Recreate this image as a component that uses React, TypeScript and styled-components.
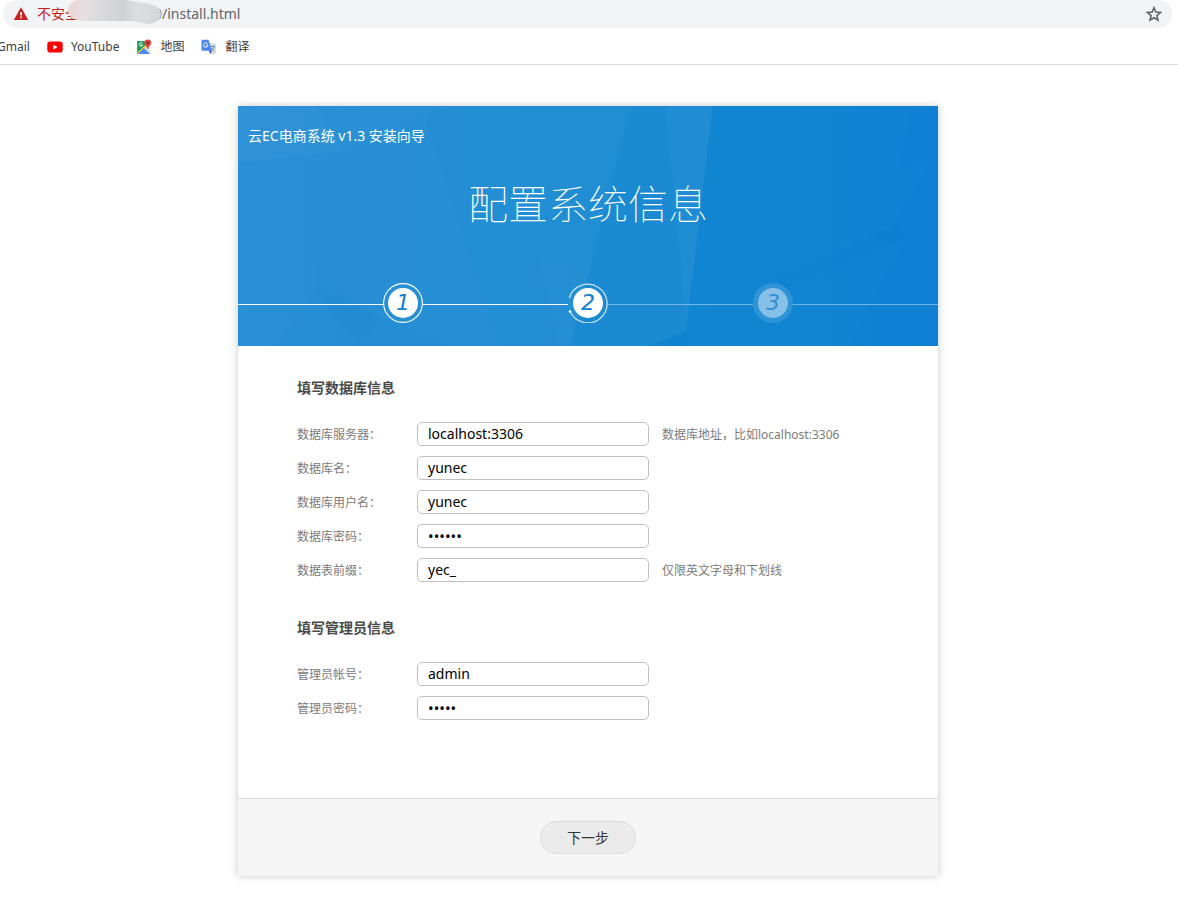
import React, { useState } from "react";
import styled, { createGlobalStyle } from "styled-components";

const GlobalStyle = createGlobalStyle`
  * { box-sizing: border-box; }
  body {
    margin: 0;
    background: #fff;
    color: #7b7b7b;
    font: 12px/20px "Noto Sans", "Noto Sans CJK SC", sans-serif;
  }
  button, input { font-family: inherit; }
`;

/* ---------- browser chrome ---------- */

const Chrome = styled.header`
  border-bottom: 1px solid #dadce0;
`;

const AddressBar = styled.div`
  display: flex;
  align-items: center;
  height: 28px;
  margin: 0 6px 0 3px;
  padding: 0 10px;
  border-radius: 14px;
  background: #f1f3f4;
`;

const SecurityButton = styled.button`
  display: flex;
  align-items: center;
  gap: 8px;
  flex: none;
  padding: 0;
  border: 0;
  background: none;
  color: #c5221f;
  font-size: 14px;
  line-height: 20px;
`;

const Redaction = styled.svg`
  position: relative;
  flex: none;
  width: 96px;
  height: 28px;
  margin: 0 -9px 0 -12px;
`;

const AddressInput = styled.input`
  flex: 1;
  min-width: 0;
  height: 26px;
  padding: 0 0 2px;
  border: 0;
  outline: 0;
  background: none;
  color: #5f6368;
  font-size: 14px;
`;

const IconButton = styled.button`
  display: flex;
  padding: 0;
  border: 0;
  background: none;
`;

const Bookmarks = styled.nav`
  display: flex;
  gap: 17px;
  height: 36px;
  align-items: center;
  padding-top: 2px;
  margin-left: -3px;
`;

const Bookmark = styled.a`
  display: flex;
  align-items: center;
  gap: 8px;
  color: #3c4043;
  text-decoration: none;
`;

/* ---------- wizard ---------- */

const Page = styled.main`
  display: flex;
  justify-content: center;
  padding: 41px 2px 24px 0;
`;

const Card = styled.form`
  width: 100%;
  max-width: 700px;
  background: #fff;
  box-shadow: 0 0 8px rgba(0, 0, 0, 0.22);
`;

const Banner = styled.div`
  position: relative;
  height: 240px;
  overflow: hidden;
  color: #fff;
`;

const Backdrop = styled.svg`
  position: absolute;
  inset: 0;
  width: 100%;
  height: 100%;
`;

const BannerContent = styled.div`
  position: relative;
  padding-top: 20px;
`;

const Product = styled.p`
  margin: 0;
  padding: 0 10px;
  font-size: 14px;
  line-height: 20px;
`;

const Title = styled.h1`
  margin: 28px 0 49px;
  text-align: center;
  font-size: 40px;
  line-height: 60px;
  font-weight: 100;
`;

const Steps = styled.ol`
  display: flex;
  align-items: center;
  margin: 0;
  padding: 0;
  list-style: none;
`;

const Line = styled.li<{ $dim?: boolean }>`
  flex: 1;
  height: 1px;
  margin-top: 2px;
  background: ${(p) => (p.$dim ? "rgba(255,255,255,.4)" : "#fff")};
`;

const Step = styled.li<{ $dim?: boolean }>`
  position: relative;
  display: flex;
  align-items: center;
  justify-content: center;
  width: 40px;
  height: 40px;
  border-radius: 50%;
  background: ${(p) => (p.$dim ? "rgba(255,255,255,.13)" : "none")};
`;

const Ring = styled.svg`
  position: absolute;
  inset: 0;
`;

const Disc = styled.span<{ $dim?: boolean }>`
  display: flex;
  align-items: center;
  justify-content: center;
  width: 30px;
  height: 30px;
  border-radius: 50%;
  background: ${(p) => (p.$dim ? "#86c0e8" : "#fff")};
  color: ${(p) => (p.$dim ? "#2f8fd3" : "#1480cb")};
  font: italic 22px/30px "DejaVu Sans", sans-serif;
`;

const Body = styled.div`
  padding: 30px 59px 78px;
`;

const Section = styled.fieldset`
  margin: 0 0 34px;
  padding: 0;
  border: 0;
  min-width: 0;
  &:last-child { margin-bottom: 0; }
`;

const Legend = styled.legend`
  margin-bottom: 22px;
  padding: 0;
  color: #4a4a4a;
  font-size: 14px;
  line-height: 24px;
  font-weight: 700;
`;

const Fields = styled.div`
  display: grid;
  gap: 10px;
`;

const Row = styled.div`
  display: flex;
  align-items: center;
`;

const Label = styled.label`
  flex: none;
  width: 120px;
  padding-top: 2px;
`;

const TextInput = styled.input`
  width: 232px;
  height: 24px;
  padding: 0 10px 2px;
  border: 1px solid #bfbfbf;
  border-radius: 5px;
  outline: 0;
  background: #fff;
  color: #000;
  font-size: 14px;
  line-height: 20px;
  &[type="password"] {
    padding-bottom: 0;
    font-size: 15px;
  }
`;

const Hint = styled.span`
  margin-left: 13px;
  padding-top: 2px;
`;

const Footer = styled.footer`
  display: flex;
  justify-content: center;
  padding: 22px 0;
  border-top: 1px solid #dcdcdc;
  background: #f5f5f5;
`;

const NextButton = styled.button`
  width: 96px;
  height: 33px;
  padding: 0;
  border: 1px solid #dcdcdc;
  border-radius: 17px;
  background: #ebebeb;
  color: #333;
  font-size: 14px;
  line-height: 31px;
`;

const WarningIcon = () => (
  <svg width="16" height="16" viewBox="0 0 16 16" aria-hidden="true">
    <path d="M8 1.2 15.2 14H.8Z" fill="#c5221f" />
    <path d="M7.2 6h1.7v3.6H7.2zM7.2 10.6h1.7v1.7H7.2z" fill="#fff" />
  </svg>
);

const StarIcon = () => (
  <svg width="16" height="16" viewBox="0 0 16 16" aria-hidden="true">
    <path
      d="m8 1.8 1.8 4.3 4.7.4-3.6 3.1 1.1 4.6L8 11.8l-4 2.4 1.1-4.6-3.6-3.1 4.7-.4Z"
      fill="none"
      stroke="#5f6368"
      strokeWidth="1.6"
    />
  </svg>
);

const YouTubeIcon = () => (
  <svg width="16" height="16" viewBox="0 0 16 16" aria-hidden="true">
    <rect x=".3" y="2.6" width="15.4" height="11" rx="2.8" fill="#f00" />
    <path d="m6.4 5.8 4.2 2.3-4.2 2.3Z" fill="#fff" />
  </svg>
);

const MapsIcon = () => (
  <svg width="16" height="16" viewBox="0 0 16 16" aria-hidden="true">
    <path d="M1.5 2H11v6L2 15.200l-.9-.8V2.600Z" fill="#1e9c57" />
    <path d="M1.200 13.800 11.500 4l1.800 1.800L3 15Z" fill="#fbc934" />
    <path d="M7.800 9 14.400 15H2Z" fill="#4a8af4" />
    <path d="M8.500 8.600 11 6.400l3.400 3V15Z" fill="#dfe3e6" />
    <path d="M6.400 4.500A1.700 1.700 0 1 0 6.500 6H4.800" fill="none" stroke="#fff" strokeWidth=".9" />
    <path d="M11.800.6a3.400 3.400 0 0 0-3.400 3.400c0 2.500 2.700 3 3.400 7 .7-4 3.400-4.500 3.400-7A3.400 3.400 0 0 0 11.800.6Z" fill="#e0443a" />
    <circle cx="11.8" cy="4" r="1.2" fill="#7c231d" />
  </svg>
);

const TranslateIcon = () => (
  <svg width="16" height="16" viewBox="0 0 16 16" aria-hidden="true">
    <path d="M6 4.300h8a1 1 0 0 1 1 1V14a1 1 0 0 1-1 1H9.500Z" fill="#dadce0" />
    <path d="M9.500 7.500h4.500M11.700 6.500v1M13.200 7.600c-.5 2-1.700 3.400-3 4.200M10.300 8.800c.7 1.300 1.700 2.400 3 3.200" fill="none" stroke="#78849b" strokeWidth=".9" />
    <path d="m7.500 11.500 3.500 0L9.600 15Z" fill="#3a5bbb" />
    <path d="M1.500.8h6L11 11.800H1.500a1 1 0 0 1-1-1v-9a1 1 0 0 1 1-1Z" fill="#4a86ee" />
    <path d="M6.500 4.800A2.200 2.200 0 1 0 6.900 6.400H4.900" fill="none" stroke="#fff" strokeWidth="1" />
  </svg>
);

const Facets = () => (
  <Backdrop viewBox="0 0 700 240" preserveAspectRatio="none" aria-hidden="true">
    <defs>
      <linearGradient id="west" x1="0" y1="0" x2="1" y2="0">
        <stop offset="0" stopColor="#2a90d5" />
        <stop offset="1" stopColor="#238dd3" />
      </linearGradient>
      <linearGradient id="east" x1="0" y1="0" x2="1" y2="0">
        <stop offset="0" stopColor="#1587d2" />
        <stop offset=".75" stopColor="#1185d2" />
        <stop offset="1" stopColor="#1081d4" />
      </linearGradient>
      <linearGradient id="shade" x1="0" y1="1" x2="1" y2="0">
        <stop offset="0" stopColor="#0b7dce" stopOpacity="0" />
        <stop offset="1" stopColor="#0b7dce" stopOpacity=".6" />
      </linearGradient>
    </defs>
    <rect width="700" height="240" fill="url(#east)" />
    <path d="M380 0H475L448 225 410 240H320Z" fill="#1b8ad3" />
    <path d="M0 0H393L353 160 332 240H0Z" fill="url(#west)" />
    <path d="M0 0H77L107 45 0 57Z" fill="#fff" opacity=".025" />
    <path d="M77 0H208L186 10 107 45Z" fill="#fff" opacity=".01" />
    <path d="M186 10 208 0H393L353 160 332 240H262Z" fill="#158cd4" opacity=".14" />
    <path d="M76 156 76 184 38 240H120L142 213Z" fill="#0784d0" opacity=".06" />
    <path d="M76 184 180 226 210 240H120Z" fill="#0784d0" opacity=".1" />
    <path d="M300 150 320 240H332L353 160Z" fill="#fff" opacity=".015" />
    <path d="M427 0H475L448 225 442 150Z" fill="#fff" opacity=".02" />
    <path d="M448 225 410 240H452Z" fill="#0d84d0" opacity=".25" />
    <path d="M660 118 520 178 510 200 668 132Z" fill="url(#shade)" />
    <path d="M674 0 660 68 700 45V0Z" fill="#107dd4" opacity=".35" />
    <path d="M668 132 700 170V240H610Z" fill="#107dd4" opacity=".35" />
    <path d="M700 45 655 118 668 132 700 170Z" fill="#107dd4" opacity=".35" />
  </Backdrop>
);

type FieldProps = {
  id: string;
  label: string;
  initial: string;
  type?: "text" | "password";
  hint?: string;
};

const Field = ({ id, label, initial, type = "text", hint }: FieldProps) => {
  const [value, setValue] = useState(initial);
  return (
    <Row>
      <Label htmlFor={id}>{label}</Label>
      <TextInput id={id} type={type} value={value} onChange={(e) => setValue(e.target.value)} />
      {hint && <Hint>{hint}</Hint>}
    </Row>
  );
};

export default function App() {
  return (
    <>
      <GlobalStyle />
      <Chrome>
        <AddressBar>
          <SecurityButton type="button">
            <WarningIcon />
            不安全
          </SecurityButton>
          <Redaction viewBox="0 0 96 28" aria-hidden="true">
            <defs>
              <linearGradient id="smudge">
                <stop offset="0" stopColor="#ecd6d6" />
                <stop offset=".18" stopColor="#e6dfe0" />
                <stop offset=".4" stopColor="#d6d8da" />
                <stop offset=".6" stopColor="#cfd1d3" />
                <stop offset=".75" stopColor="#dcdee0" />
                <stop offset="1" stopColor="#d3d6d8" />
              </linearGradient>
            </defs>
            <path d="M1 10C2 4 5 1 12 0L60 0 76 3C88 4 94 8 94 14c0 6-5 10-14 10l-14-3-48 0C8 21 0 17 1 10Z" fill="url(#smudge)" />
          </Redaction>
          <AddressInput aria-label="Address" defaultValue="0/install.html" />
          <IconButton type="button" aria-label="Bookmark this page">
            <StarIcon />
          </IconButton>
        </AddressBar>
        <Bookmarks>
          <Bookmark href="#gmail">Gmail</Bookmark>
          <Bookmark href="#youtube"><YouTubeIcon />YouTube</Bookmark>
          <Bookmark href="#maps"><MapsIcon />地图</Bookmark>
          <Bookmark href="#translate"><TranslateIcon />翻译</Bookmark>
        </Bookmarks>
      </Chrome>
      <Page>
        <Card onSubmit={(e) => e.preventDefault()}>
          <Banner>
            <Facets />
            <BannerContent>
              <Product>云EC电商系统 v1.3 安装向导</Product>
              <Title>配置系统信息</Title>
              <Steps>
                <Line aria-hidden="true" />
                <Step>
                  <Ring width="40" height="40" aria-hidden="true">
                    <circle cx="20" cy="20" r="19.4" fill="none" stroke="#fff" strokeWidth="1.1" />
                  </Ring>
                  <Disc>1</Disc>
                </Step>
                <Line aria-hidden="true" />
                <Step aria-current="step">
                  <Ring width="40" height="40" aria-hidden="true">
                    <path d="M1.3 15A19.3 19.3 0 1 1 2 28" fill="none" stroke="#fff" strokeOpacity=".75" strokeWidth="1.3" />
                    <circle cx="2" cy="28.5" r="1.3" fill="#fff" />
                  </Ring>
                  <Disc>2</Disc>
                </Step>
                <Line $dim aria-hidden="true" />
                <Step $dim>
                  <Disc $dim>3</Disc>
                </Step>
                <Line $dim aria-hidden="true" />
              </Steps>
            </BannerContent>
          </Banner>
          <Body>
            <Section>
              <Legend>填写数据库信息</Legend>
              <Fields>
                <Field id="db-host" label="数据库服务器：" initial="localhost:3306" hint="数据库地址，比如localhost:3306" />
                <Field id="db-name" label="数据库名：" initial="yunec" />
                <Field id="db-user" label="数据库用户名：" initial="yunec" />
                <Field id="db-password" label="数据库密码：" initial="123456" type="password" />
                <Field id="db-prefix" label="数据表前缀：" initial="yec_" hint="仅限英文字母和下划线" />
              </Fields>
            </Section>
            <Section>
              <Legend>填写管理员信息</Legend>
              <Fields>
                <Field id="admin-name" label="管理员帐号：" initial="admin" />
                <Field id="admin-password" label="管理员密码：" initial="admin" type="password" />
              </Fields>
            </Section>
          </Body>
          <Footer>
            <NextButton type="submit">下一步</NextButton>
          </Footer>
        </Card>
      </Page>
    </>
  );
}
